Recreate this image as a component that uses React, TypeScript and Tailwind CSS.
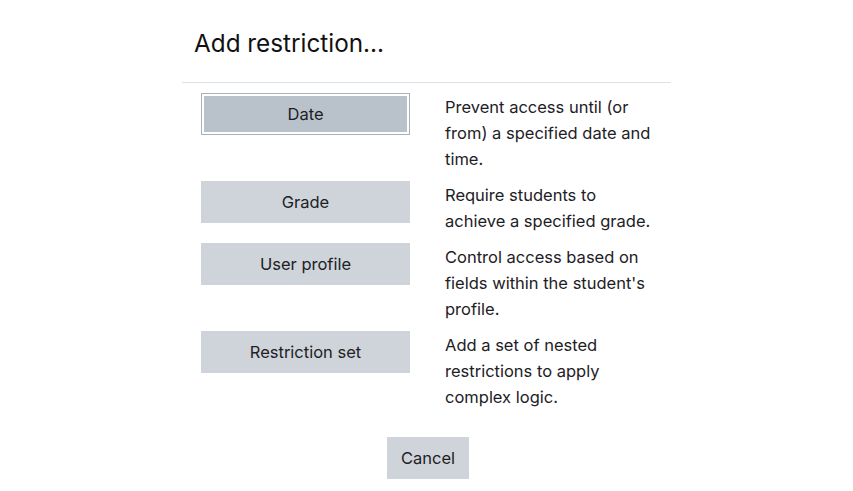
const opciones = [
  { nombre: 'Date', texto: 'Prevent access until (or from) a specified date and time.', activo: true },
  { nombre: 'Grade', texto: 'Require students to achieve a specified grade.' },
  { nombre: 'User profile', texto: "Control access based on fields within the student's profile." },
  { nombre: 'Restriction set', texto: 'Add a set of nested restrictions to apply complex logic.' },
]

function App() {
  return (
    <div className="min-h-screen bg-white font-['Inter',sans-serif] text-[#1d2125]">
      <div className="mx-auto w-[489px]">
        <div className="flex h-[83px] items-center border-b border-[#dee2e6] px-[12px] pt-[5px]">
          <h5 className="text-[24.3px] leading-none text-[#111]">Add restriction...</h5>
        </div>

        <div className="px-[19px] pt-[10px]">
          {opciones.map((op) => (
            <div key={op.nombre} className="mb-[9px] grid grid-cols-[209px_1fr] gap-x-[35px]">
              <div>
                {op.activo ? (
                  <button className="h-[42px] w-full border border-[#a9b1ba] bg-white p-[2px]">
                    <span className="flex h-full w-full items-center justify-center bg-[#b9c1ca] pt-px text-[16.5px]">
                      {op.nombre}
                    </span>
                  </button>
                ) : (
                  <button className="h-[42px] w-full bg-[#ced4da] pt-px text-[16.5px]">{op.nombre}</button>
                )}
              </div>
              <p className="pt-px text-[16.5px] leading-[26px]">{op.texto}</p>
            </div>
          ))}
        </div>

        <div className="flex justify-center pt-[18px]">
          <button className="ml-[3px] h-[42px] w-[82px] bg-[#ced4da] pt-px text-[16.5px]">Cancel</button>
        </div>
      </div>
    </div>
  )
}

export default App
